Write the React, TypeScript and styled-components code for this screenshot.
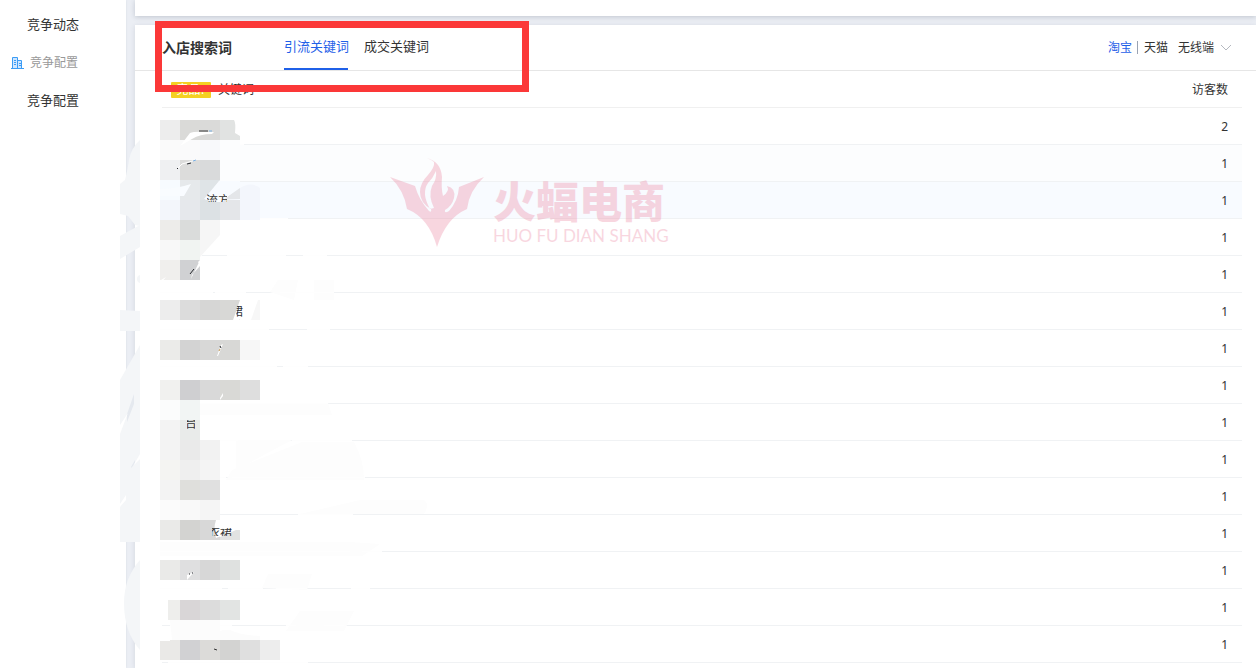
import React, { useState } from "react";
import styled, { createGlobalStyle } from "styled-components";

const Global = createGlobalStyle`
  * { box-sizing: border-box; }
  body {
    margin: 0;
    background: #ebeef4;
    color: #333;
    font: 12px/18px "Noto Sans", "Noto Sans CJK SC", sans-serif;
  }
  button, select { font: inherit; color: inherit; }
`;

const Page = styled.div`
  position: relative;
  display: flex;
  gap: 9px;
  min-height: 100vh;
  overflow: hidden;
`;

const Sidebar = styled.nav`
  display: flex;
  flex-direction: column;
  flex: none;
  gap: 18px;
  width: 126px;
  padding-top: 14px;
  background: #fff;
  box-shadow: 0 0 2px rgba(60, 70, 90, 0.1);
`;

const SideLink = styled.a<{ $section?: boolean }>`
  display: flex;
  align-items: center;
  gap: 6px;
  height: 20px;
  padding-left: ${(p) => (p.$section ? 11 : 27)}px;
  padding-top: ${(p) => (p.$section ? 2 : 0)}px;
  color: ${(p) => (p.$section ? "#999" : "#333")};
  font-size: ${(p) => (p.$section ? 12 : 13)}px;
  text-decoration: none;
`;

const Main = styled.main`
  display: flex;
  flex-direction: column;
  flex: 1;
  gap: 9px;
  min-width: 0;
`;

const Card = styled.section<{ $grow?: boolean }>`
  flex: ${(p) => (p.$grow ? "1" : "none")};
  min-height: 16px;
  background: #fff;
  box-shadow: 0 1px 5px rgba(60, 70, 90, ${(p) => (p.$grow ? 0.14 : 0.24)});
`;

const CardHeader = styled.header`
  display: flex;
  align-items: center;
  height: 46px;
  padding: 0 25px 0 27px;
  border-bottom: 1px solid #e6e6e6;
`;

const Title = styled.h2`
  margin: 0 52px 0 0;
  font-size: 14px;
  line-height: 20px;
  font-weight: 700;
`;

const Tabs = styled.div`
  display: flex;
  align-self: stretch;
  flex: 1;
  gap: 16px;
`;

const Tab = styled.button<{ $active: boolean }>`
  width: 64px;
  padding: 0 0 2px;
  border: 0;
  border-bottom: 2px solid ${(p) => (p.$active ? "#1f60e8" : "transparent")};
  background: none;
  color: ${(p) => (p.$active ? "#1f60e8" : "#333")};
  font-size: 13px;
  white-space: nowrap;
`;

const Filters = styled.div`
  display: flex;
  align-items: center;
`;

const Platform = styled.button<{ $active?: boolean }>`
  padding: 0;
  border: 0;
  background: none;
  color: ${(p) => (p.$active ? "#1f60e8" : "#333")};
`;

const Divider = styled.span`
  width: 1px;
  height: 13px;
  margin: 0 6px 0 5px;
  background: #9aa3b2;
`;

const SelectWrap = styled.label`
  display: flex;
  align-items: center;
  gap: 6px;
  margin-left: 10px;
`;

const Select = styled.select`
  width: 37px;
  padding: 0;
  border: 0;
  background: none;
  appearance: none;
`;

const TableWrap = styled.div`
  padding: 0 14px 0 27px;
`;

const Table = styled.table`
  width: 100%;
  border-collapse: separate;
  border-spacing: 0;
`;

const Row = styled.tr<{ $tint?: string }>`
  background: ${(p) => p.$tint || "transparent"};
`;

const HeadCell = styled.th<{ $right?: boolean }>`
  height: 37px;
  padding: 2px 14px 0 9px;
  border-bottom: 1px solid #f0f0f0;
  font-weight: 400;
  text-align: ${(p) => (p.$right ? "right" : "left")};
`;

const Cell = styled.td<{ $right?: boolean }>`
  height: 37px;
  padding: 2px 14px 0 9px;
  border-bottom: 1px solid #f0f2f4;
  text-align: ${(p) => (p.$right ? "right" : "left")};
`;

const HeadGroup = styled.div`
  display: flex;
  align-items: center;
  gap: 7px;
`;

const Badge = styled.span`
  width: 40px;
  height: 16px;
  border-radius: 1px;
  background: #f4d022;
  color: #fff;
  line-height: 16px;
  text-align: center;
`;

const Highlight = styled.div`
  position: absolute;
  left: 155px;
  top: 21px;
  width: 374px;
  height: 71px;
  border: 7px solid #fb3838;
  pointer-events: none;
`;

const Mosaic = styled.svg`
  position: absolute;
  left: 0;
  top: 0;
  pointer-events: none;
`;

const Watermark = styled.div`
  position: absolute;
  left: 390px;
  top: 158px;
  display: flex;
  gap: 9px;
  opacity: 0.3;
  color: #eb7a98;
  pointer-events: none;
`;

const BrandText = styled.div`
  padding-top: 14px;
  white-space: nowrap;
`;

const BrandName = styled.div`
  font: 900 43px/54px "Noto Sans CJK SC", sans-serif;
`;

const BrandLatin = styled.div`
  font: 400 17px/20px Lato, sans-serif;
`;

const visitors = [2, 1, 1, 1, 1, 1, 1, 1, 1, 1, 1, 1, 1, 1, 1];
const tints: Record<number, string> = { 1: "#fcfdfe", 2: "#f8fbff" };

// Each strip: top, then one colour for every 20px block from x = 160.
const strips: [number, string[]][] = [
  [120, ["#ededed", "#dadad8", "#dadad9"]],
  [140, ["#fafafa", "#fafafb", "#f8f9fb", "#fcfdfe"]],
  [160, ["#eff0f2", "#dcdcdb", "#d9dadb"]],
  [180, ["#f7fbff", "#e6e9eb"]],
  [200, ["#f3f6fb", "#e6e8ec", "#dce1e4", "#e4e6e9", "#f3f6fc"]],
  [220, ["#edecea", "#dadcdb"]],
  [240, ["#f8f8f8", "#f1f4f2"]],
  [260, ["#f0efed", "#d0d1d3"]],
  [300, ["#ededed", "#dcdcdc", "#d6d6d5", "#d8d8d6"]],
  [340, ["#ebebe9", "#d3d3d3", "#d8d8d7", "#d8d8d6", "#f7f7f7"]],
  [380, ["#f1f1ef", "#cfcfd1", "#d9d9d9", "#d9d9d6", "#dedede"]],
  [400, ["#fbfcfc", "#f2f5f4"]],
  [420, ["#f3f3f3", "#e9ebea"]],
  [440, ["#f3f3f3", "#eaeaea", "#f2f2f2"]],
  [460, ["#f4f4f2", "#efefef", "#f4f4f4"]],
  [480, ["#f3f3f3", "#dfdfdc", "#e0e0e0"]],
  [500, ["#fbfbfb", "#f9f9f9", "#f5f5f5"]],
  [520, ["#eaeae8", "#d3d3d1", "#d8d8d8"]],
  [560, ["#eaeae8", "#dfdfe0", "#d7d7d7", "#dfe1e0"]],
  [600, ["#eeeeec", "#d9d6d7", "#dcdcdc", "#e2e4e3"]],
  [640, ["#eae9e7", "#d1d1d3", "#dcdbd9", "#d3d3d2", "#dfdfdf", "#ededed"]],
];

// Wiped stretches of the row rules: x, y, width.
const wipes: [number, number, number][] = [
  [160, 144, 84], [160, 181, 65], [160, 218, 128],
  [160, 255, 42], [227, 255, 59], [303, 255, 24],
  [160, 292, 53], [215, 292, 31], [280, 292, 34], [314, 292, 20],
  [160, 329, 109], [307, 329, 23], [160, 366, 117], [283, 366, 25],
  [160, 403, 168], [160, 440, 78], [292, 440, 60],
  [160, 477, 66], [232, 477, 133], [160, 514, 56], [298, 514, 55],
  [160, 551, 190], [362, 551, 20], [160, 588, 62], [228, 588, 35],
  [276, 588, 31], [351, 588, 19], [170, 625, 19], [193, 625, 39],
  [286, 625, 10], [324, 625, 20], [168, 662, 140],
];

function Smudges() {
  return (
    <Mosaic width="440" height="668" viewBox="0 0 440 668" aria-hidden="true">
      <defs>
        <clipPath id="top"><rect x="207" y="194" width="20" height="8" /></clipPath>
        <clipPath id="side"><path d="M237 304h8v14h-9z" /></clipPath>
        <clipPath id="low"><rect x="212" y="528" width="20" height="8" /></clipPath>
        <clipPath id="box"><rect x="187" y="420" width="8" height="9" /></clipPath>
      </defs>
      <g fill="#f4f6f8">
        <path d="M140 140q-9 8-11 20-1 8-4 20l-5 4v30l8 2 7 9 5 1z" />
        <path d="M120 236l20-11v22l-20 12z" />
        <path d="M120 310l20 1v20h-20z" />
        <path d="M140 345v197h-20V380z" />
        <path d="M140 560q-16 18-16 43 0 29 16 47z" />
      </g>
      <circle cx="141" cy="279" r="4" fill="#f4f6f8" />
      <path d="M127 414l7-20v10l-7 18zM131 467l4-7v4l-4 4z" fill="#e5e9ef" />
      <path d="M120 434l6-16 2-5-8 12zM120 472l6-3-6 3zM120 504l6-9v5l-6 7zM133 466l7-7v-5z" fill="#fff" />
      <rect x="140" y="108" width="20" height="560" fill="#fff" />
      <g fill="#fdfdfd">
        <path d="M236 440h56l-56 30zM232 470l70-28h52q10 18 10 38H226zM300 514l60-14h64q6 4 0 14z" />
        <path d="M160 542h190l30 2-18 12H160zM262 588l6-14h44l-5 16zM290 625l10-14h54l-10 20H286z" />
        <path d="M200 403h128l4 12H200zM270 292l8-12h20l-4 20zM314 280h20v20h-20z" />
      </g>
      <g shapeRendering="crispEdges">
        {wipes.map(([x, y, w]) => (
          <rect key={x + "-" + y} x={x} y={y} width={w} height="1" fill={y === 181 ? "#fafcff" : "#fefefe"} />
        ))}
        {strips.map(([y, colors]) =>
          colors.map((c, i) => (
            <rect key={y + "-" + i} x={160 + i * 20} y={y} width="20" height="20" fill={c} />
          ))
        )}
      </g>
      <path d="M220 120h14q2 3 1 13l5 3v4h-20z" fill="#e1e3e2" />
      <path d="M200 180h20l-15 20h-5z" fill="#dfe4e7" />
      <path d="M206 200l34-1V188l-13 9z" fill="#e4e6e9" />
      <path d="M204 199h20l16-12v-6h-21zM227 197l13-10h-13z" fill="#f8fbff" />
      <path d="M240 188q11-7 20 0v13h-20z" fill="#f3f6fc" />
      <path d="M220 220v15l-20 22v-37z" fill="#f6f6f6" />
      <path d="M180 146l10-13q4-2 19-1h5l-2 2q-12 0-20 5z" fill="#fff" />
      <path d="M160 189q16 0 31-5l-7 12h-24z" fill="#f9fcff" />
      <path d="M191 279l9-19v6l-8 9zM198 262l5-5-3 9zM161 280l5-3-6 7zM160 238l2-3z" fill="#fff" />
      <path d="M240 300h20v20h-9q-2-6-11-3z" fill="#f7f7f7" />
      <path d="M233 320l7-20h18l-7 20q-4-7-12 0z" fill="#fff" />
      <path d="M217 356l4-11 2-1-5 12zM220 400l3-4v-3l-3 5zM187 580v-5l7-3zM188 600v-2h3v2z" fill="#fff" />
      <path d="M216 520h24v9l-24 9q-3-9 0-18z" fill="#fff" />
      <path d="M220 540v-3l16-7h4v10z" fill="#e2e3e2" />
      <path d="M160 600h8v20h-8zM160 638h10v3h-10z" fill="#fff" />
      <path d="M170 620h50v20h-48zM220 631q5-2 10-1 10 5 30 6v4h-40z" fill="#fcfcfc" />
      <path d="M199 131h9M214 649l3 1" stroke="#333" fill="none" />
      <path d="M178 168l4-4 14-4" stroke="#fff" fill="none" />
      <path d="M177 169l1-1M187 164l4-1M190 274l4-5M220 346l1 2M189 574h1M192 573h1" stroke="#25272c" fill="none" />
      <path d="M193 161l3-1M209 131h3" stroke="#79afe1" fill="none" />
      <path d="M219 351l1-2" stroke="#c99a50" fill="none" />
      <g fill="#333" fontSize="12" fontFamily='"Noto Sans CJK SC", sans-serif'>
        <path d="M206 199l10-4 11 1-4 6h-12z" fill="#fbfcfd" />
        <text x="206" y="205" clipPath="url(#top)">流方</text>
        <text x="231" y="316" clipPath="url(#side)">裙</text>
        <text x="208" y="537" clipPath="url(#low)">衣裙</text>
        <text x="185" y="428" clipPath="url(#box)">台</text>
      </g>
    </Mosaic>
  );
}

function BrandMark() {
  return (
    <svg width="94" height="90" viewBox="0 0 94 90" fill="currentColor" aria-hidden="true">
      <path d="M0 19L25 28Q29 42 39 53Q42 55 41 51Q30 45 30 34Q30 25 38 17Q45 9 44 4Q42 2 37 0Q51 4 52 19Q51 30 53 38Q60 33 57 28Q66 30 64 40Q62 48 55 52Q54 56 59 53Q68 43 69 29L94 19Q79 33 77 51Q56 60 47 89Q39 60 17 51Q14 32 0 19ZM46 13Q43 20 38 25Q31 35 40 51L44 50Q38 38 42 28Q47 21 46 13Z" fillRule="evenodd" />
    </svg>
  );
}

export default function App() {
  const [tab, setTab] = useState(0);
  return (
    <>
      <Global />
      <Page>
        <Sidebar aria-label="竞争">
          <SideLink href="#dynamic">竞争动态</SideLink>
          <SideLink href="#section" $section>
            <svg width="13" height="12" viewBox="0 0 13 12" fill="none" stroke="#3b9cf5" aria-hidden="true">
              <path d="M1 1h6v10H1zM7 4h4v7H7z" fill="#cfe6ff" stroke="none" />
              <path d="M0 11.5h13M1.5 11V.5h5V11M6.5 3.5h4V11M3 3.5h2M3 5.5h2M3 7.5h2M8 6.5h2M8 8.5h2" />
            </svg>
            竞争配置
          </SideLink>
          <SideLink href="#config">竞争配置</SideLink>
        </Sidebar>
        <Main>
          <Card />
          <Card $grow>
            <CardHeader>
              <Title>入店搜索词</Title>
              <Tabs role="tablist">
                {["引流关键词", "成交关键词"].map((name, i) => (
                  <Tab key={name} role="tab" aria-selected={tab === i} $active={tab === i} onClick={() => setTab(i)}>
                    {name}
                  </Tab>
                ))}
              </Tabs>
              <Filters>
                <Platform $active>淘宝</Platform>
                <Divider />
                <Platform>天猫</Platform>
                <SelectWrap>
                  <Select aria-label="终端">
                    <option>无线端</option>
                  </Select>
                  <svg width="10" height="7" viewBox="0 0 10 7" fill="none" stroke="#b5b9c0" aria-hidden="true">
                    <path d="M0 1l5 5 5-5" />
                  </svg>
                </SelectWrap>
              </Filters>
            </CardHeader>
            <TableWrap>
              <Table>
                <thead>
                  <tr>
                    <HeadCell scope="col">
                      <HeadGroup>
                        <Badge>竞品?</Badge>
                        <span>关键词</span>
                      </HeadGroup>
                    </HeadCell>
                    <HeadCell scope="col" $right>访客数</HeadCell>
                  </tr>
                </thead>
                <tbody>
                  {visitors.map((count, i) => (
                    <Row key={i} $tint={tints[i]}>
                      <Cell />
                      <Cell $right>{count}</Cell>
                    </Row>
                  ))}
                </tbody>
              </Table>
            </TableWrap>
          </Card>
        </Main>
        <Smudges />
        <Watermark>
          <BrandMark />
          <BrandText>
            <BrandName>火蝠电商</BrandName>
            <BrandLatin>HUO FU DIAN SHANG</BrandLatin>
          </BrandText>
        </Watermark>
        <Highlight />
      </Page>
    </>
  );
}
